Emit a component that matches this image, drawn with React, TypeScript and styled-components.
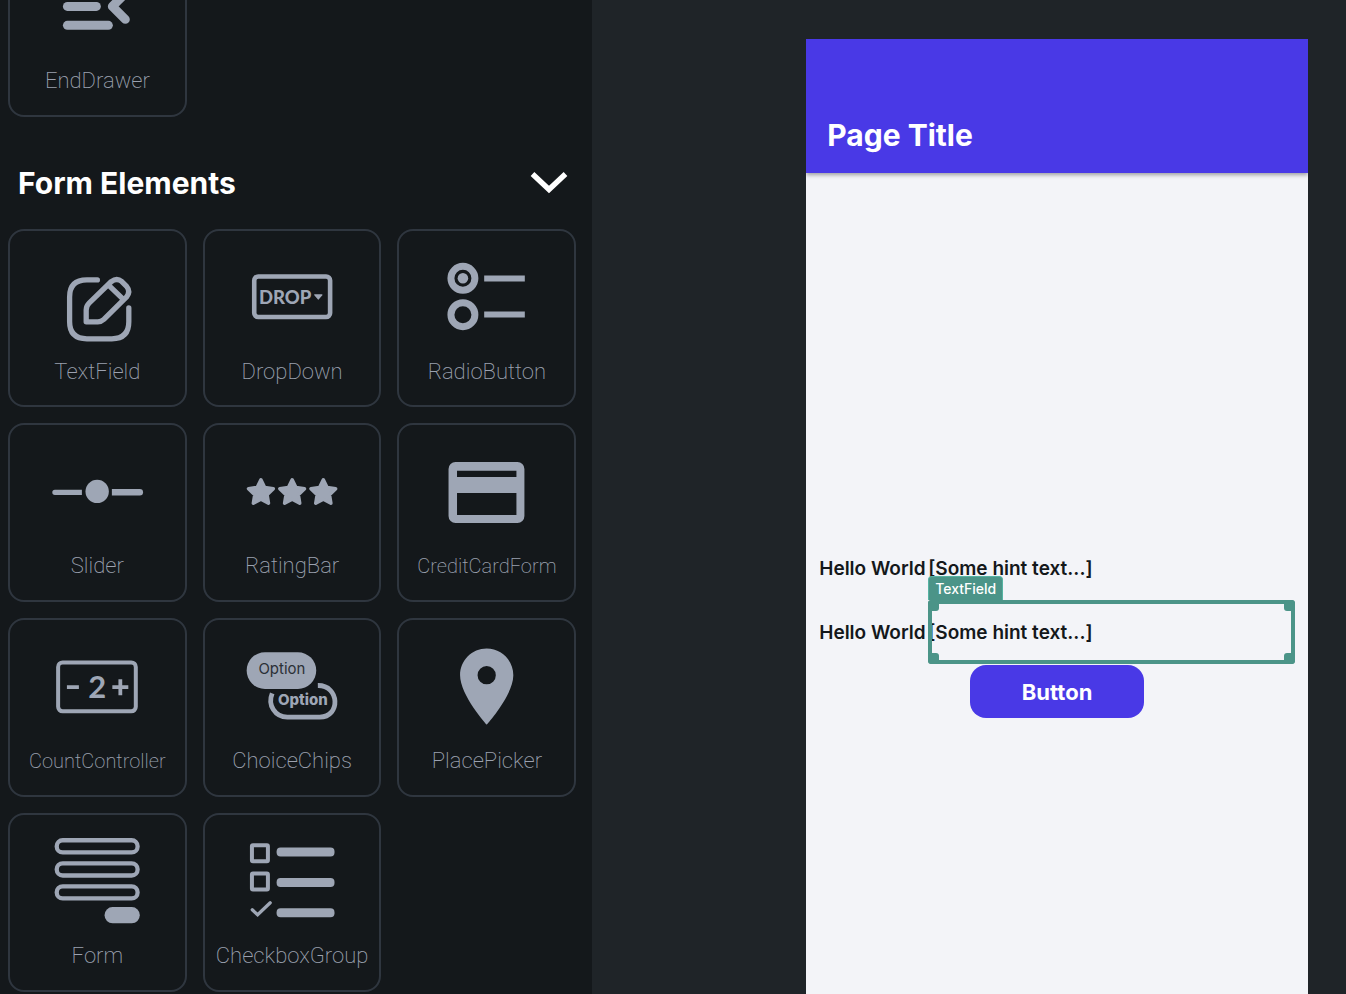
import React from "react";
import styled, { createGlobalStyle } from "styled-components";

const GlobalStyle = createGlobalStyle`
  *, *::before, *::after { box-sizing: border-box; }
  body { margin: 0; background: #1f2428; font-family: Inter, "Liberation Sans", sans-serif; }
  h1, h2 { margin: 0; }
  button { font: inherit; cursor: pointer; }
`;

const ICON = "#9ea6b5";
const GREEN = "#4b9488";
const VIOLET = "#4939e6";

const Page = styled.div`
  display: grid;
  grid-template-columns: 44fr 56fr;
  height: 100vh;
  overflow: hidden;
`;

const Sidebar = styled.aside`
  background: #14181b;
  padding: 0 16px 0 8px;
  min-width: 0;
  overflow: hidden;
`;

const Scrolled = styled.div`
  margin-top: -62px;
`;

const TileGrid = styled.div`
  display: grid;
  grid-template-columns: repeat(3, 1fr);
  gap: 16px;
`;

const Tile = styled.button`
  display: flex;
  flex-direction: column;
  align-items: center;
  aspect-ratio: 1;
  min-width: 0;
  padding: 0;
  background: transparent;
  border: 2px solid #2f363f;
  border-radius: 16px;
`;

const TileIcon = styled.svg`
  display: block;
  width: 100%;
  flex: none;
  font-family: Lato, sans-serif;
`;

const ChipText = styled.text`
  font-family: Inter, sans-serif;
  font-size: 15px;
  text-anchor: middle;
`;

const TileLabel = styled.span<{ $small?: boolean }>`
  font-family: Roboto, sans-serif;
  font-weight: 200;
  font-size: ${(p) => (p.$small ? 20 : 22)}px;
  line-height: 40px;
  color: #9ba1af;
  white-space: nowrap;
`;

const SectionHeader = styled.header`
  display: flex;
  align-items: center;
  justify-content: space-between;
  padding: 46px 7px 26px 10px;
`;

const SectionTitle = styled.h2`
  font-size: 30px;
  line-height: 40px;
  font-weight: 700;
  color: #fff;
`;

const CollapseButton = styled.button`
  display: flex;
  padding: 0;
  border: 0;
  background: transparent;
`;

const Canvas = styled.main`
  display: flex;
  min-width: 0;
  padding: 39px 38px 0 214px;
`;

const Phone = styled.section`
  display: flex;
  flex-direction: column;
  flex: 1;
  min-width: 0;
  overflow: hidden;
  background: #f3f4f8;
`;

const AppBar = styled.header`
  display: flex;
  align-items: flex-end;
  height: 134px;
  padding: 0 21px 18px;
  background: ${VIOLET};
  box-shadow: 0 2px 4px rgba(0, 0, 0, 0.35);
`;

const PageTitle = styled.h1`
  font-size: 30px;
  line-height: 40px;
  font-weight: 700;
  color: #fff;
`;

const FormBody = styled.form`
  display: flex;
  flex-direction: column;
  padding: 363px 13px 0;
`;

const FormRow = styled.div`
  display: flex;
  align-items: center;
  height: 64px;
  font-size: 19px;
  font-weight: 600;
  color: #14181b;
`;

const RowLabel = styled.label`
  flex: 0 0 109px;
  white-space: nowrap;
`;

const Field = styled.div`
  position: relative;
  flex: 1;
  min-width: 0;
  height: 100%;
`;

const FieldInput = styled.input`
  width: 100%;
  height: 100%;
  padding: 0;
  border: 0;
  outline: 0;
  background: transparent;
  font: inherit;
  color: inherit;
`;

const Selection = styled.div`
  position: absolute;
  inset: 0;
  border: 4px solid ${GREEN};
  border-radius: 4px;
  pointer-events: none;
`;

const Handle = styled.i<{ $v: "top" | "bottom"; $h: "left" | "right" }>`
  position: absolute;
  ${(p) => p.$v}: -4px;
  ${(p) => p.$h}: -4px;
  width: 11px;
  height: 11px;
  border-radius: 3px;
  background: ${GREEN};
`;

const Tag = styled.span`
  position: absolute;
  left: 0;
  bottom: 100%;
  height: 24px;
  padding: 0 6px;
  border: 1px solid #55b3a3;
  border-bottom: 0;
  border-radius: 4px 4px 0 0;
  background: ${GREEN};
  color: #fff;
  font-size: 14px;
  line-height: 24px;
  font-weight: 500;
`;

const SubmitButton = styled.button`
  align-self: center;
  width: 174px;
  height: 53px;
  margin-top: 1px;
  border: 0;
  border-radius: 16px;
  background: ${VIOLET};
  color: #fff;
  font-size: 22px;
  font-weight: 700;
`;

const fill = { fill: ICON };
const line = (strokeWidth: number) => ({ fill: "none", stroke: ICON, strokeWidth });

const STAR =
  "M0-13 3.8-5.3 12.4-4 6.2 2 7.6 10.5 0 6.5-7.6 10.5-6.2 2-12.4-4-3.8-5.3Z";

const icons: Record<string, React.ReactNode> = {
  EndDrawer: (
    <>
      <rect x="53" y="42" width="50" height="9" rx="4.5" {...fill} />
      <rect x="53" y="61" width="38" height="9" rx="4.5" {...fill} />
      <rect x="53" y="80" width="50" height="9" rx="4.5" {...fill} />
      <path d="M115.5 78.5 102.5 65.5 115.5 52.5" strokeLinecap="round" strokeLinejoin="round" {...line(9)} />
    </>
  ),
  TextField: (
    <g strokeLinecap="round" strokeLinejoin="round" {...line(5.3)}>
      <path d="M87.5 48H77Q59.7 48 59.7 65V90Q59.7 107 77 107H102Q119 107 119 90V76" />
      <path d="M76.3 90V78Q76.3 74 79.2 71.2L101.5 49.6Q107 45.5 112 49.6L116.8 54.4Q121 59.5 116.8 65L94 87.5Q91.3 90 88 90Z" />
      <path d="M100 54.500 112.500 66.500" />
    </g>
  ),
  DropDown: (
    <>
      <rect x="49.3" y="44.6" width="76" height="40.6" rx="4" {...line(4.6)} />
      <text x="54" y="72" fontSize="18.5" fontWeight="900" {...fill}>DROP</text>
      <path d="M110 63h7l-3.500 4z" stroke={ICON} strokeWidth="1.4" strokeLinejoin="round" {...fill} />
    </>
  ),
  RadioButton: (
    <>
      <circle cx="64" cy="46.4" r="12" {...line(7)} />
      <circle cx="64" cy="46.4" r="5.3" {...fill} />
      <circle cx="64" cy="82.8" r="12" {...line(7)} />
      <path d="M85.300 46.600h40.700M85.300 82.700h40.700" {...line(6)} />
    </>
  ),
  Slider: (
    <g transform="translate(0 .8)">
      <path d="M72 63H45a2.600 2.600 0 0 0 0 5.300H72Z" {...fill} />
      <circle cx="87.3" cy="64.7" r="11.7" {...fill} />
      <path d="M102 62.300h28a3.200 3.200 0 0 1 0 6.500h-28Z" {...fill} />
    </g>
  ),
  RatingBar: (
    <g stroke={ICON} strokeWidth="3.5" strokeLinejoin="round" {...fill}>
      <path d={STAR} transform="translate(56 66.8)" />
      <path d={STAR} transform="translate(87.3 66.8)" />
      <path d={STAR} transform="translate(118.500 66.8)" />
    </g>
  ),
  CreditCardForm: (
    <path
      transform="translate(.6 .8)"
      fillRule="evenodd"
      d="M56 35.300h62a7 7 0 0 1 7 7v47a7 7 0 0 1-7 7H56a7 7 0 0 1-7-7v-47a7 7 0 0 1 7-7ZM57.500 44v6.300H117V44ZM57.500 66.300v22H117v-22Z"
      {...fill}
    />
  ),
  CountController: (
    <>
      <rect x="48.2" y="41.5" width="77.8" height="49" rx="4.5" {...line(4)} />
      <path d="M57 66.300h12M102.500 66.300h16M110.500 58.300v16" {...line(3.8)} />
      <text x="87.3" y="77.5" fontSize="31" fontWeight="700" textAnchor="middle" {...fill}>2</text>
    </>
  ),
  ChoiceChips: (
    <>
      <rect x="41.7" y="31.3" width="69.700" height="36.7" rx="18.3" {...fill} />
      <ChipText x="77" y="53.500" fill="#2b3036">Option</ChipText>
      <path d="M67.300 72.500C62.500 84 70 96.300 82.500 96.300H115C136 96.300 135 64.300 113 64.600" {...line(4.8)} />
      <ChipText x="98" y="84.500" fontWeight="800" {...fill}>Option</ChipText>
    </>
  ),
  PlacePicker: (
    <path
      transform="translate(42.1 20) scale(3.81)"
      fillRule="evenodd"
      d="M12 2C8.130 2 5 5.130 5 9c0 5.250 7 13 7 13s7-7.750 7-13c0-3.870-3.130-7-7-7zm0 9.400a2.400 2.400 0 1 1 0-4.800 2.400 2.400 0 0 1 0 4.800z"
      {...fill}
    />
  ),
  Form: (
    <>
      <rect x="46.8" y="24.3" width="81" height="12.2" rx="6" {...line(4.3)} />
      <rect x="46.8" y="47.4" width="81" height="12.2" rx="6" {...line(4.3)} />
      <rect x="46.8" y="70.4" width="81" height="12.2" rx="6" {...line(4.3)} />
      <rect x="94.7" y="91.2" width="35.3" height="16.3" rx="8" {...fill} />
    </>
  ),
  CheckboxGroup: (
    <>
      <rect x="47" y="29.3" width="16" height="16" rx="1" {...line(4)} />
      <rect x="47" y="57.6" width="16" height="16" rx="1" {...line(4)} />
      <path d="M47.300 93.900 52.700 98.900 65.300 86.900" strokeLinecap="round" {...line(3.3)} />
      <rect x="71.7" y="31.5" width="58" height="9" rx="4" {...fill} />
      <rect x="71.7" y="62.2" width="58" height="9" rx="4" {...fill} />
      <rect x="71.7" y="92.4" width="58" height="9" rx="4" {...fill} />
    </>
  ),
};

const formElements = [
  "TextField", "DropDown", "RadioButton",
  "Slider", "RatingBar", "CreditCardForm",
  "CountController", "ChoiceChips", "PlacePicker",
  "Form", "CheckboxGroup",
];

function ElementTile({ name }: { name: string }) {
  return (
    <Tile type="button">
      <TileIcon viewBox="0 -1 175 121" aria-hidden="true">{icons[name]}</TileIcon>
      <TileLabel $small={name === "CreditCardForm" || name === "CountController"}>{name}</TileLabel>
    </Tile>
  );
}

export default function App() {
  return (
    <Page>
      <GlobalStyle />
      <Sidebar>
        <Scrolled>
          <TileGrid>
            <ElementTile name="EndDrawer" />
          </TileGrid>
          <SectionHeader>
            <SectionTitle>Form Elements</SectionTitle>
            <CollapseButton type="button" aria-label="Collapse Form Elements">
              <svg width="40" height="24" viewBox="0 0 40 24" aria-hidden="true">
                <path d="M3.500 3 20 18.500 36.500 3" fill="none" stroke="#fff" strokeWidth="5.4" />
              </svg>
            </CollapseButton>
          </SectionHeader>
          <TileGrid>
            {formElements.map((name) => (
              <ElementTile key={name} name={name} />
            ))}
          </TileGrid>
        </Scrolled>
      </Sidebar>
      <Canvas>
        <Phone>
          <AppBar>
            <PageTitle>Page Title</PageTitle>
          </AppBar>
          <FormBody onSubmit={(e) => e.preventDefault()}>
            <FormRow>
              <RowLabel htmlFor="first">Hello World</RowLabel>
              <Field>
                <FieldInput id="first" defaultValue="[Some hint text...]" />
              </Field>
            </FormRow>
            <FormRow>
              <RowLabel htmlFor="second">Hello World</RowLabel>
              <Field>
                <FieldInput id="second" defaultValue="[Some hint text...]" />
                <Selection>
                  <Handle $v="top" $h="left" />
                  <Handle $v="top" $h="right" />
                  <Handle $v="bottom" $h="left" />
                  <Handle $v="bottom" $h="right" />
                </Selection>
                <Tag>TextField</Tag>
              </Field>
            </FormRow>
            <SubmitButton type="submit">Button</SubmitButton>
          </FormBody>
        </Phone>
      </Canvas>
    </Page>
  );
}
